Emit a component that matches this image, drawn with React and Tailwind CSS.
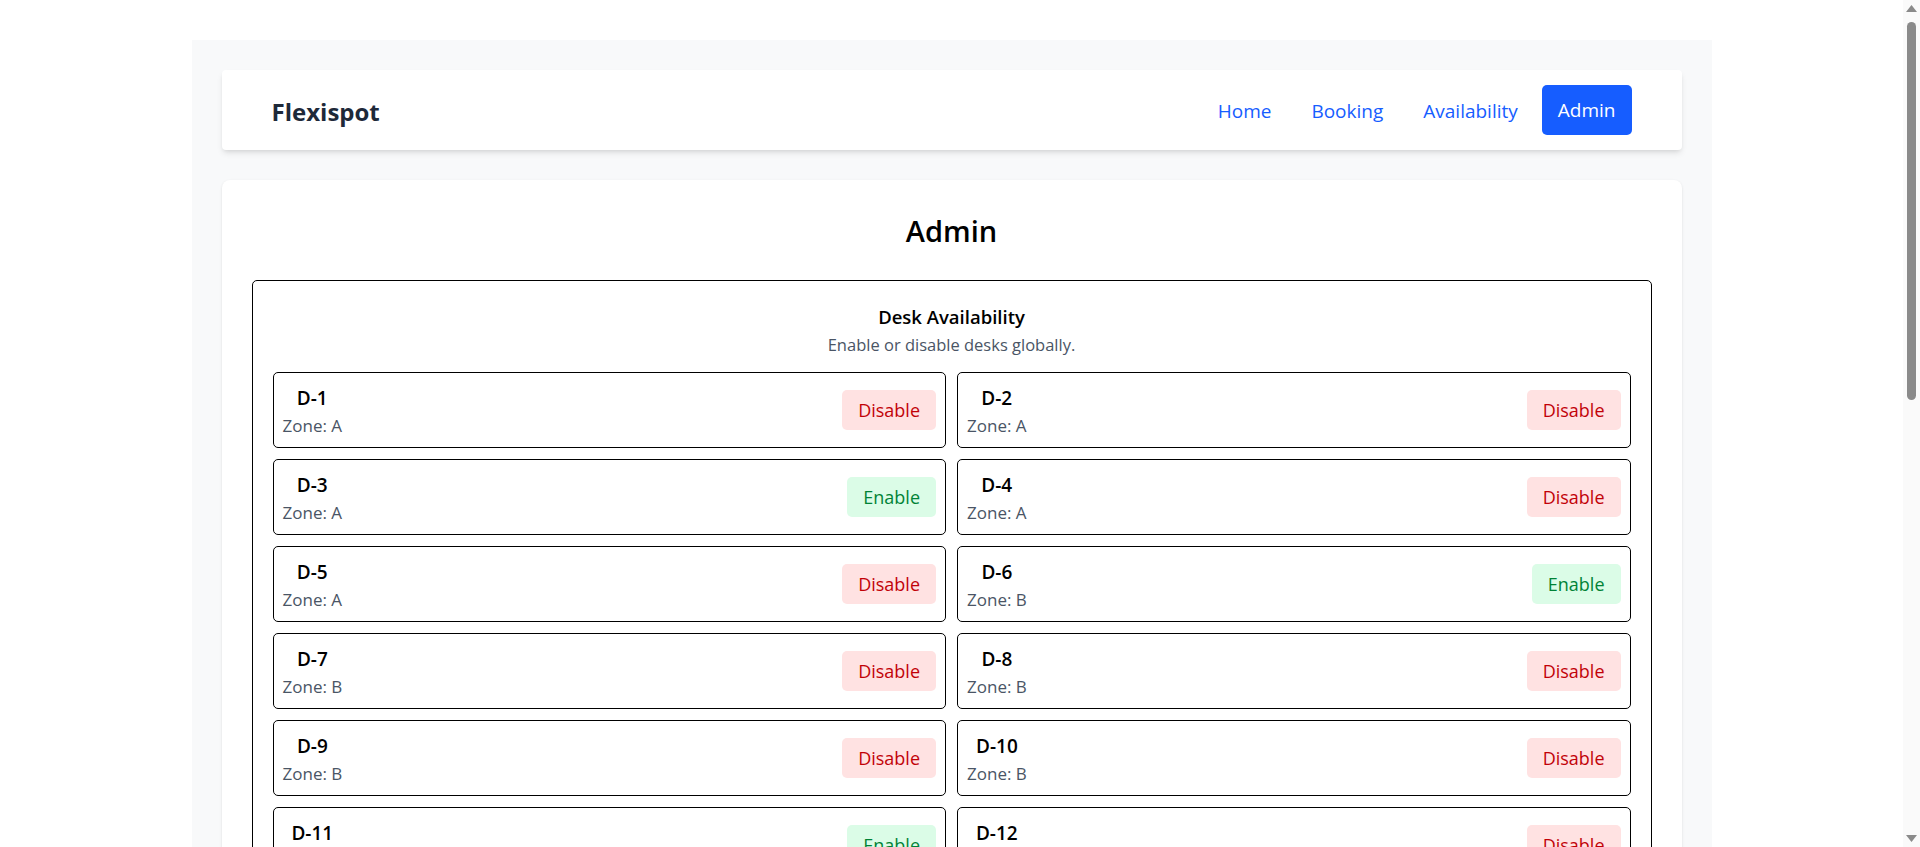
const zones = ['A', 'A', 'A', 'A', 'A', 'B', 'B', 'B', 'B', 'B', 'C', 'C', 'C', 'C', 'C', 'D', 'D', 'D', 'D', 'D', 'E', 'E', 'E', 'E', 'E', 'F', 'F', 'F', 'F', 'F']
const disabled = ['D-3', 'D-6', 'D-11', 'D-17', 'D-24']

const desks = zones.map((zone, i) => ({
    id: `D-${i + 1}`,
    zone,
    enabled: !disabled.includes(`D-${i + 1}`),
}))

function DeskCard({ desk }) {
    return (
        <div className="flex items-center justify-between border border-black rounded-[5px] px-[9px] py-[9px]">
            <div className="flex flex-col items-center translate-y-[2px]">
                <span className="text-[19px] leading-[28px] font-semibold text-black">{desk.id}</span>
                <span className="text-[17px] leading-[28px] text-gray-600">Zone: {desk.zone}</span>
            </div>
            {desk.enabled ? (
                <button className="h-[40px] px-4 rounded-[5px] bg-red-100 text-red-700 text-[18px]">
                    Disable
                </button>
            ) : (
                <button className="h-[40px] px-4 rounded-[5px] bg-green-100 text-green-700 text-[18px]">
                    Enable
                </button>
            )}
        </div>
    )
}

function Scrollbar() {
    return (
        <div className="w-[17px] shrink-0 bg-[#fafafa] flex flex-col items-center pt-[5px] pb-[5px]">
            <svg width="11" height="8" viewBox="0 0 11 8">
                <path d="M5.5 0 L11 7 L0 7 Z" fill="#8a8a8a" />
            </svg>
            <div className="mt-[9px] w-[9px] h-[378px] rounded-full bg-[#8a8a8a]" />
            <div className="flex-1" />
            <svg width="11" height="8" viewBox="0 0 11 8">
                <path d="M0 1 L11 1 L5.5 8 Z" fill="#8a8a8a" />
            </svg>
        </div>
    )
}

export default function App() {
    return (
        <div className="h-screen flex bg-white font-['Open_Sans',sans-serif]">
            <div className="flex-1 overflow-hidden">
                <div className="pt-10 pb-10">
                    <div className="w-[1520px] mx-auto bg-[#f8f9fa] p-[30px] flex flex-col gap-[30px]">
                        {/* Navbar */}
                        <nav className="h-[80px] bg-white rounded shadow-md flex items-center justify-between px-[50px]">
                            <span className="text-[24px] font-bold text-gray-800 translate-y-[2px]">Flexispot</span>
                            <div className="flex items-center gap-2 text-[19px]">
                                <a className="px-4 text-[#165dff] translate-y-[1px]">Home</a>
                                <a className="px-4 text-[#165dff] translate-y-[1px]">Booking</a>
                                <a className="px-4 text-[#165dff] translate-y-[1px]">Availability</a>
                                <a className="h-[50px] px-4 flex items-center rounded-[5px] bg-[#165dff] text-white">Admin</a>
                            </div>
                        </nav>

                        {/* Main card */}
                        <div className="bg-white rounded-lg shadow-sm p-[30px]">
                            <h1 className="text-center text-[29px] leading-[42px] font-semibold text-black mb-[28px]">Admin</h1>

                            <div className="border border-black rounded-[5px] p-5">
                                <h2 className="text-center text-[18.5px] leading-[32px] font-semibold text-black">Desk Availability</h2>
                                <p className="text-center text-[16.5px] leading-[24px] text-gray-600 mb-[15px]">
                                    Enable or disable desks globally.
                                </p>
                                <div className="grid grid-cols-2 gap-[11px]">
                                    {desks.map((d) => (
                                        <DeskCard key={d.id} desk={d} />
                                    ))}
                                </div>
                            </div>
                        </div>
                    </div>
                </div>
            </div>
            <Scrollbar />
        </div>
    )
}
